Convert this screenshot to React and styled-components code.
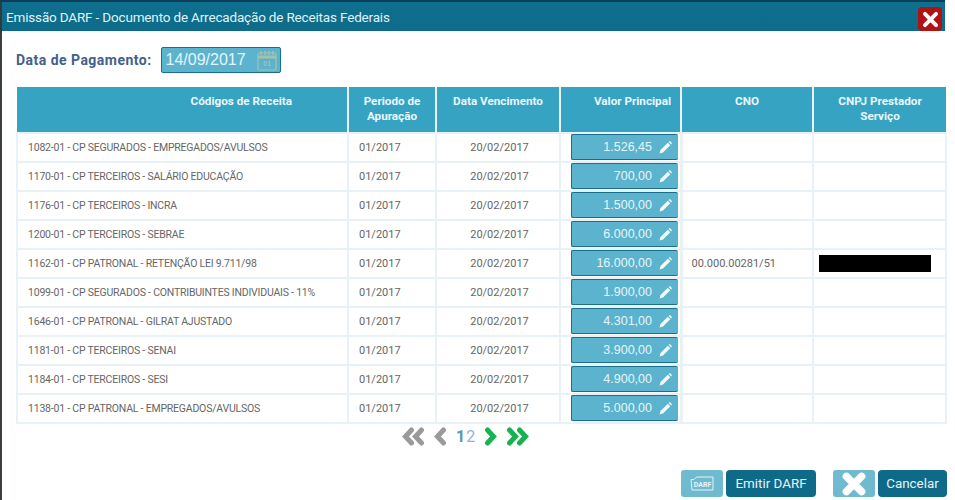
import React from 'react';
import styled, { createGlobalStyle } from 'styled-components';

const FONT = 'Roboto, "Noto Sans", sans-serif';

const GlobalStyle = createGlobalStyle`
  html, body {
    margin: 0;
    padding: 0;
    background: #fff;
    font-family: ${FONT};
  }
`;

const Dialog = styled.div`
  box-sizing: border-box;
  width: 955px;
  height: 500px;
  overflow: hidden;
  background: #fff;
  display: flex;
  flex-direction: column;
`;

const TitleBar = styled.div`
  box-sizing: border-box;
  width: 945px;
  height: 31px;
  flex: none;
  display: flex;
  align-items: center;
  justify-content: space-between;
  padding: 0 3px 0 6px;
  background: linear-gradient(#0f6f8e, #0e6c8a);
  border-top: 2px solid #0b3f57;
  border-left: 2px solid #2c3a42;
`;

const Title = styled.h1`
  margin: 0 0 0 -2px;
  font-size: 13.5px;
  letter-spacing: -0.17px;
  font-weight: 400;
  color: #dff3f8;
`;

const CloseButton = styled.button`
  width: 24px;
  height: 24px;
  margin-top: 5px;
  padding: 0;
  border: 0;
  border-radius: 4px;
  background: #b11212;
  display: flex;
  align-items: center;
  justify-content: center;
`;

const Body = styled.div`
  flex: 1;
  display: flex;
  flex-direction: column;
  border-left: 2px solid #3a3f42;
`;

const DateRow = styled.div`
  display: flex;
  align-items: center;
  gap: 9px;
  height: 26px;
  margin: 16px 0 14px 14px;
`;

const DateLabel = styled.label`
  font-size: 14px;
  letter-spacing: 0.47px;
  font-weight: 700;
  color: #43608a;
`;

const DateField = styled.div`
  box-sizing: border-box;
  width: 120px;
  height: 26px;
  display: flex;
  align-items: center;
  justify-content: space-between;
  padding: 0 3px 0 4px;
  background: #5cb3cd;
  border: 1px solid #17708e;
  border-radius: 2px;
  font-family: "Liberation Sans", Arial, sans-serif;
  font-size: 16px;
  color: #e6f5f9;
`;

const Table = styled.table`
  box-sizing: border-box;
  width: 929px;
  margin-left: 14px;
  flex: none;
  table-layout: fixed;
  border-collapse: collapse;
`;

const HeadCell = styled.th`
  height: 46px;
  padding: 7px ${(p) => p.$right || 8}px 0 8px;
  box-sizing: border-box;
  vertical-align: top;
  background: #36a3c3;
  color: #e9f7fb;
  font-size: 11.7px;
  line-height: 15px;
  font-weight: 700;
  text-align: ${(p) => (p.$right ? 'right' : 'center')};
  border-left: 2px solid #eaf4f8;
  &:first-child { border-left: 0; }
`;

const Cell = styled.td`
  height: 29px;
  padding: 0 0 0 ${(p) => p.$pad || 0}px;
  box-sizing: border-box;
  border: 2px solid #e8f2f6;
  color: #666;
  font-size: 11px;
  text-align: ${(p) => p.$align || 'left'};
  white-space: nowrap;
`;

const CodeCell = styled(Cell)`
  font-size: 10.5px;
  letter-spacing: -0.21px;
`;

const ValueCell = styled(Cell)`
  padding: 0 0 1px 10px;
  border-right-width: 3px;
`;

const ValueButton = styled.div`
  box-sizing: border-box;
  width: 107px;
  height: 26px;
  display: flex;
  align-items: center;
  justify-content: flex-end;
  gap: 7px;
  padding-right: 6px;
  background: #5cb3cd;
  border: 1px solid #17708e;
  border-right: 0;
  border-radius: 2px;
  font-family: "Liberation Sans", Arial, sans-serif;
  font-size: 12.5px;
  color: #e6f5f9;
`;

const Redacted = styled.span`
  display: block;
  width: 112px;
  height: 17px;
  background: #000;
`;

const Pager = styled.div`
  display: flex;
  align-items: center;
  gap: 9px;
  height: 19px;
  margin: 3px 0 0 400px;
`;

const PageNumbers = styled.div`
  display: flex;
  gap: 1px;
  font-size: 16px;
  line-height: 19px;
`;

const PageNumber = styled.span`
  color: ${(p) => (p.$current ? '#5b96b4' : '#8db6cc')};
  font-weight: ${(p) => (p.$current ? 700 : 400)};
`;

const Footer = styled.div`
  display: flex;
  justify-content: flex-end;
  align-items: center;
  height: 27px;
  margin: 24px 8px 0 0;
`;

const ActionGroup = styled.div`
  display: flex;
  gap: 3px;
  margin-left: 17px;
`;

const IconTile = styled.div`
  box-sizing: border-box;
  width: 42px;
  height: 27px;
  border-radius: 3px;
  background: #70bacf;
  display: flex;
  align-items: center;
  justify-content: center;
`;

const ActionButton = styled.button`
  box-sizing: border-box;
  width: ${(p) => p.$width}px;
  height: 27px;
  padding: 0;
  border: 0;
  border-radius: 4px;
  background: #0f6a8a;
  color: #e6f5f9;
  font-family: ${FONT};
  font-size: 13.4px;
`;

const Cross = ({ size, weight }) => (
  <svg width={size} height={size} viewBox="0 0 24 24">
    <path d="M5 5 L19 19 M19 5 L5 19" stroke="#fff" strokeWidth={weight} strokeLinecap="round" />
  </svg>
);

const Pencil = () => (
  <svg width="13" height="13" viewBox="0 0 13 13">
    <path d="M0.5 12.5 L1.5 9 L8.8 1.7 L11.3 4.2 L4 11.5 Z" fill="#f2fafc" />
    <path d="M9.6 0.9 L10.3 0.3 Q10.8 0 11.2 0.3 L12.7 1.8 Q13 2.2 12.7 2.7 L12.1 3.4 Z" fill="#f2fafc" />
  </svg>
);

const CalendarIcon = () => (
  <svg width="20" height="21" viewBox="0 0 20 21">
    <rect x="1" y="3" width="18" height="17" rx="1.5" fill="none" stroke="#a8c0a8" strokeWidth="1.2" />
    <path d="M1 7 H19" stroke="#a8c0a8" strokeWidth="3" />
    <path d="M4 1 V5 M8 1 V5 M12 1 V5 M16 1 V5" stroke="#a8c0a8" strokeWidth="1.6" />
    <text x="10" y="16" fontSize="7" fontWeight="700" fill="#a8c0a8" textAnchor="middle">01</text>
  </svg>
);

const DarfIcon = () => (
  <svg width="24" height="15" viewBox="0 0 24 15">
    <path d="M1 3.5 H4 L6.5 1 H23 V14 H2 Z" fill="none" stroke="#e6f5f9" strokeWidth="1" />
    <text x="12.5" y="10.5" fontSize="7" fontWeight="700" fill="#e6f5f9" textAnchor="middle">DARF</text>
  </svg>
);

// chevrons gordos da paginacao
const Chevron = ({ dir, color, double }) => {
  const pts = dir === 'left' ? 'M9.5 3 L3.5 9.5 L9.5 16' : 'M3.5 3 L9.5 9.5 L3.5 16';
  return (
    <svg width={double ? 23 : 13} height="19" viewBox={`0 0 ${double ? 23 : 13} 19`}>
      <path d={pts} fill="none" stroke={color} strokeWidth="5" strokeLinecap="round" />
      {double && (
        <path d={pts} transform="translate(10 0)" fill="none" stroke={color} strokeWidth="5" strokeLinecap="round" />
      )}
    </svg>
  );
};

const rows = [
  ['1082-01 - CP SEGURADOS - EMPREGADOS/AVULSOS', '1.526,45'],
  ['1170-01 - CP TERCEIROS - SALÁRIO EDUCAÇÃO', '700,00'],
  ['1176-01 - CP TERCEIROS - INCRA', '1.500,00'],
  ['1200-01 - CP TERCEIROS - SEBRAE', '6.000,00'],
  ['1162-01 - CP PATRONAL - RETENÇÃO LEI 9.711/98', '16.000,00', '00.000.00281/51', true],
  ['1099-01 - CP SEGURADOS - CONTRIBUINTES INDIVIDUAIS - 11%', '1.900,00'],
  ['1646-01 - CP PATRONAL - GILRAT AJUSTADO', '4.301,00'],
  ['1181-01 - CP TERCEIROS - SENAI', '3.900,00'],
  ['1184-01 - CP TERCEIROS - SESI', '4.900,00'],
  ['1138-01 - CP PATRONAL - EMPREGADOS/AVULSOS', '5.000,00'],
];

const App = () => (
  <Dialog>
    <GlobalStyle />
    <TitleBar>
      <Title>Emissão DARF - Documento de Arrecadação de Receitas Federais</Title>
      <CloseButton aria-label="Fechar">
        <Cross size={19} weight={5} />
      </CloseButton>
    </TitleBar>
    <Body>
      <DateRow>
        <DateLabel>Data de Pagamento:</DateLabel>
        <DateField>
          14/09/2017
          <CalendarIcon />
        </DateField>
      </DateRow>
      <Table>
        <colgroup>
          <col style={{ width: 331 }} />
          <col style={{ width: 88 }} />
          <col style={{ width: 124 }} />
          <col style={{ width: 121 }} />
          <col style={{ width: 132 }} />
          <col style={{ width: 133 }} />
        </colgroup>
        <thead>
          <tr>
            <HeadCell $right={55}>Códigos de Receita</HeadCell>
            <HeadCell>Periodo de Apuração</HeadCell>
            <HeadCell>Data Vencimento</HeadCell>
            <HeadCell $right={9}>Valor Principal</HeadCell>
            <HeadCell>CNO</HeadCell>
            <HeadCell>CNPJ Prestador Serviço</HeadCell>
          </tr>
        </thead>
        <tbody>
          {rows.map(([code, value, cno, redacted]) => (
            <tr key={code}>
              <CodeCell $pad={10}>{code}</CodeCell>
              <Cell $pad={10}>01/2017</Cell>
              <Cell $align="center" $pad={3}>20/02/2017</Cell>
              <ValueCell>
                <ValueButton>
                  {value}
                  <Pencil />
                </ValueButton>
              </ValueCell>
              <Cell $pad={9}>{cno}</Cell>
              <Cell $pad={5}>{redacted && <Redacted />}</Cell>
            </tr>
          ))}
        </tbody>
      </Table>
      <Pager>
        <Chevron dir="left" color="#9a9a9a" double />
        <Chevron dir="left" color="#9a9a9a" />
        <PageNumbers>
          <PageNumber $current>1</PageNumber>
          <PageNumber>2</PageNumber>
        </PageNumbers>
        <Chevron dir="right" color="#18b251" />
        <Chevron dir="right" color="#18b251" double />
      </Pager>
      <Footer>
        <ActionGroup>
          <IconTile><DarfIcon /></IconTile>
          <ActionButton $width={90}>Emitir DARF</ActionButton>
        </ActionGroup>
        <ActionGroup>
          <IconTile><Cross size={26} weight={7} /></IconTile>
          <ActionButton $width={69}>Cancelar</ActionButton>
        </ActionGroup>
      </Footer>
    </Body>
  </Dialog>
);

export default App;
